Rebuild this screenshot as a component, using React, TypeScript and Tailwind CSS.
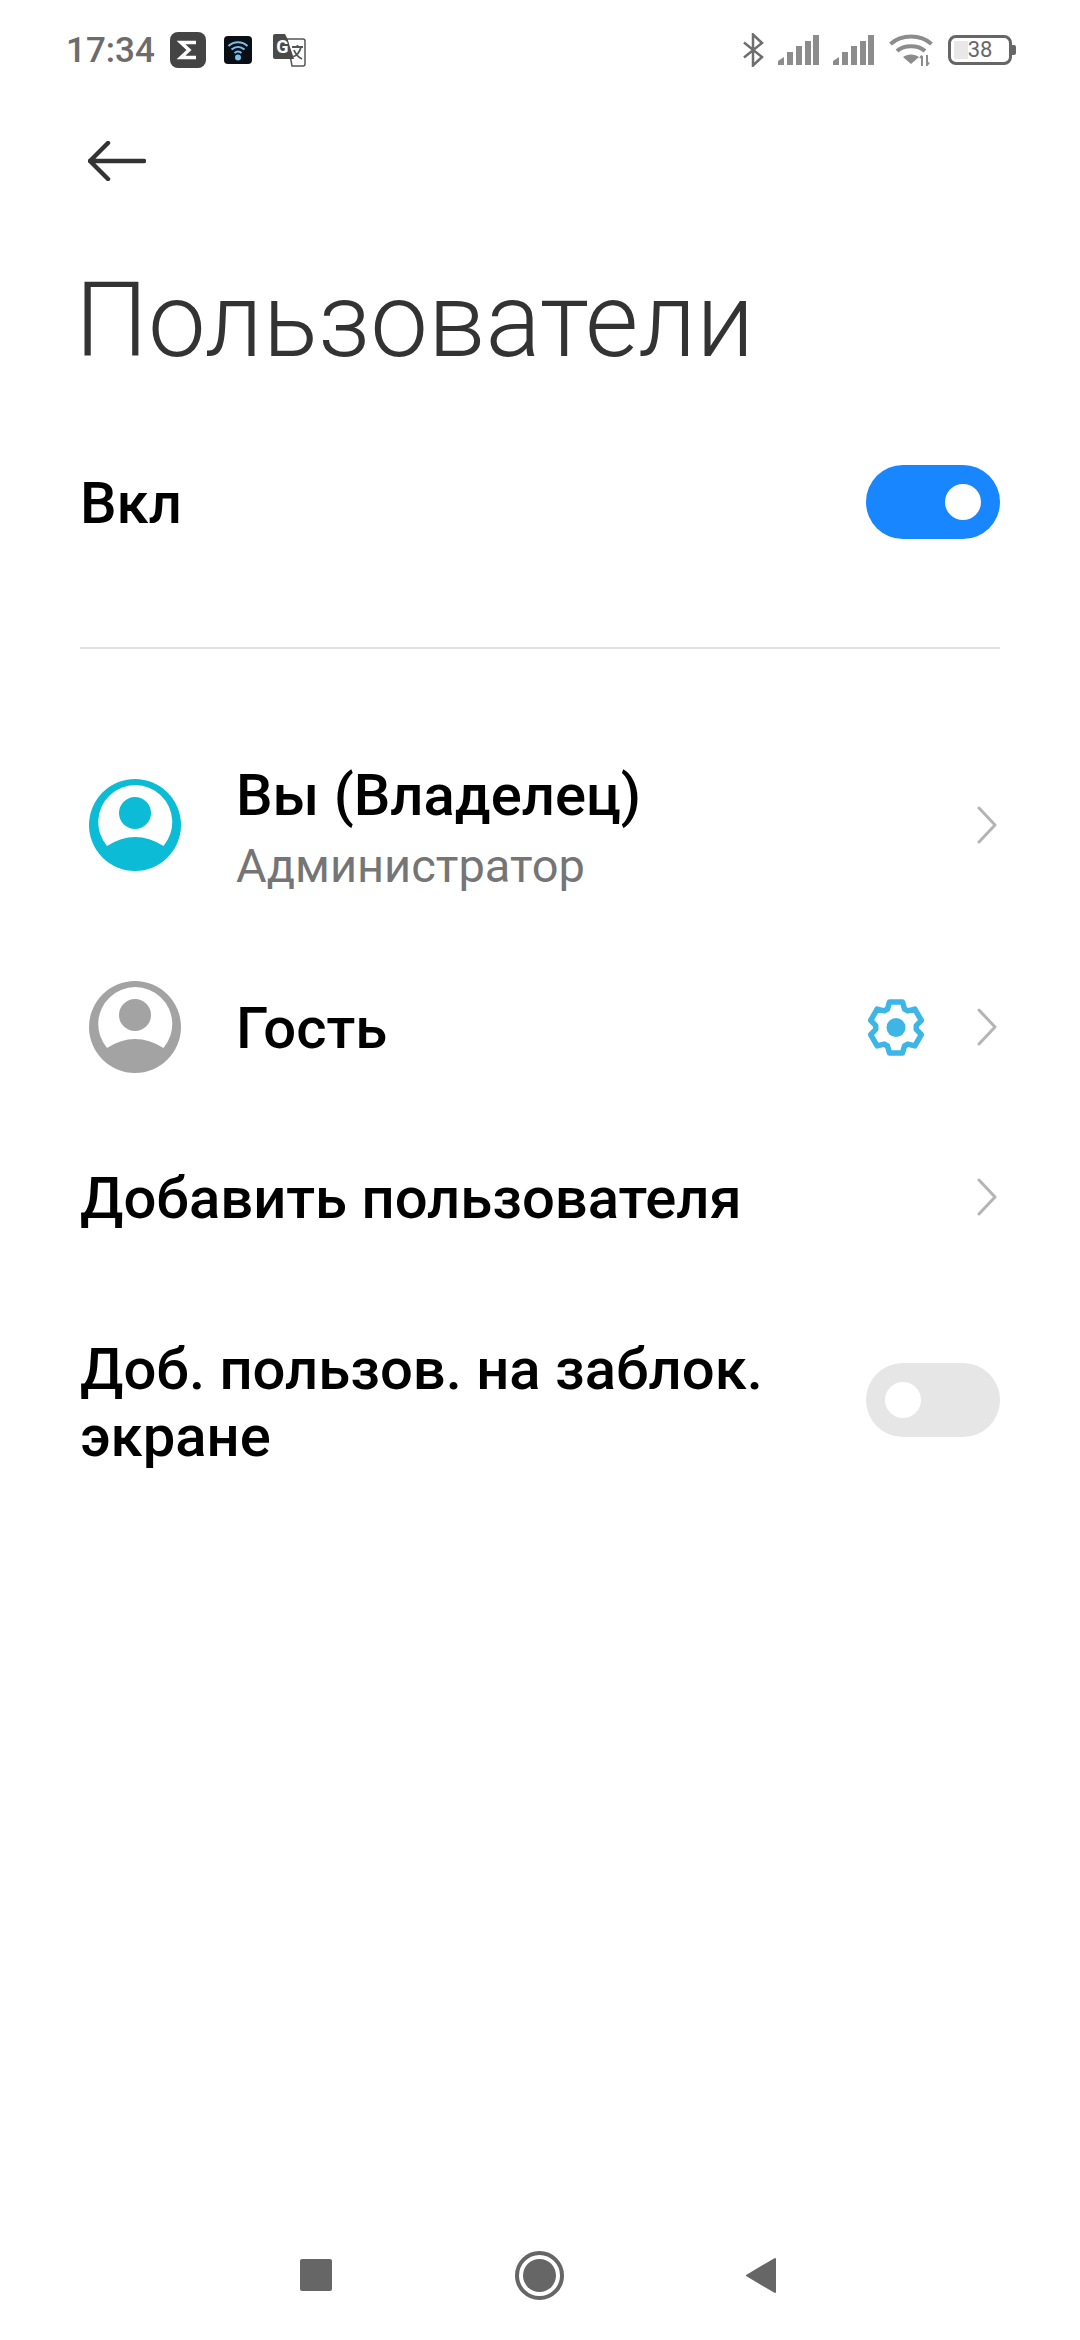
const font = "font-['Roboto','Noto_Sans',sans-serif]";

function gearPath() {
  // six flat teeth, starting from the top one
  const pts: string[] = [];
  for (let k = 0; k < 6; k++) {
    const a = (k * Math.PI) / 3 - Math.PI / 2;
    const ca = Math.cos(a);
    const sa = Math.sin(a);
    const pt = (r: number, w: number) => `${(28 + r * ca - w * sa).toFixed(2)} ${(28.5 + r * sa + w * ca).toFixed(2)}`;
    pts.push(pt(18.5, -8.5), pt(25.5, -6.5), pt(25.5, 6.5), pt(18.5, 8.5));
  }
  return "M" + pts.join("L") + "Z";
}

function Avatar({ color }: { color: string }) {
  return (
    <svg width="92" height="92" viewBox="0 0 92 92" className="shrink-0">
      <circle cx="46" cy="46" r="46" fill={color} />
      <path d="M18 67A37 37 0 1 1 74.500 67Q46 49 18 67Z" fill="#fff" />
      <circle cx="46" cy="34" r="16" fill={color} />
    </svg>
  );
}

function Chevron() {
  return (
    <svg width="20" height="38" viewBox="0 0 20 38" className="shrink-0">
      <path d="M2 2L18 19L2 36" fill="none" stroke="#b4b4b4" strokeWidth="3" strokeLinecap="round" strokeLinejoin="round" />
    </svg>
  );
}

function Toggle({ on }: { on: boolean }) {
  return (
    <div
      className={`w-[134px] h-[74px] rounded-full flex items-center shrink-0 ${
        on ? "bg-[#1786ff] justify-end pr-[19px]" : "bg-[#e6e6e6] justify-start pl-[19px]"
      }`}
    >
      <div className="w-[36px] h-[36px] rounded-full bg-white" />
    </div>
  );
}

function Signal() {
  return (
    <svg width="41" height="30" viewBox="0 0 41 30">
      <path d="M0 30V26L6 22V30Z" fill="#8c8c8c" />
      <rect x="9" y="17" width="6" height="13" fill="#8c8c8c" />
      <rect x="18" y="11" width="6" height="19" fill="#8c8c8c" />
      <rect x="27" y="6" width="6" height="24" fill="#8c8c8c" />
      <rect x="35" y="0" width="6" height="30" fill="#8c8c8c" />
    </svg>
  );
}

function StatusBar() {
  return (
    <div className="h-[100px] pl-[66px] pr-[64px] flex items-center justify-between shrink-0">
      <div className="flex items-center">
        <span className="text-[35px] leading-none font-medium text-[#6c6c6c] w-[104px]">17:34</span>
        <div className="w-[36px] h-[36px] rounded-[8px] bg-[#444444] flex items-center justify-center">
          <svg width="24" height="24" viewBox="0 0 24 24">
            <path d="M20 4.500H5L13 12L5 19.500H20" fill="none" stroke="#fff" strokeWidth="3.500" />
          </svg>
        </div>
        <div className="ml-[18px] w-[28px] h-[28px] rounded-[4px] bg-[#0a0f16] flex items-center justify-center">
          <svg width="24" height="24" viewBox="0 0 24 24" fill="none" stroke="#76c0ee" strokeWidth="2">
            <path d="M2.500 8C8 3 16 3 21.500 8" />
            <path d="M5.500 11.500C9.500 8 14.500 8 18.500 11.500" />
            <path d="M8.500 15C10.500 13.300 13.500 13.300 15.500 15" />
            <circle cx="12" cy="19.500" r="3" fill="#76c0ee" stroke="none" />
          </svg>
        </div>
        <svg width="34" height="34" viewBox="0 0 34 34" className="ml-[20px]">
          <path d="M15 6H31A2 2 0 0 1 33 8V31A2 2 0 0 1 31 33H20Z" fill="#fff" stroke="#555" strokeWidth="1.500" />
          <path d="M3 1H13L15 5L22 26H3A2 2 0 0 1 1 24V3A2 2 0 0 1 3 1Z" fill="#4a4a4a" />
          <text x="10.500" y="20" fontSize="18" fontWeight="700" fill="#fff" textAnchor="middle" fontFamily="Roboto">G</text>
          <path d="M20 14H31M25.500 12V14M29 14C27.500 20 24 23 20.500 24M22 17C23.500 21 26 24 30 26" fill="none" stroke="#555" strokeWidth="1.800" />
        </svg>
      </div>
      <div className="flex items-center">
        <svg width="21" height="34" viewBox="0 0 21 34" fill="none" stroke="#6e6e6e" strokeWidth="2.500">
          <path d="M1 9.500L19 24L10 32.500V1.500L19 10L1 24.500" />
        </svg>
        <div className="ml-[14px] flex gap-[14px]">
          <Signal />
          <Signal />
        </div>
        <svg width="44" height="32" viewBox="0 0 44 32" className="ml-[15px]">
          <g fill="none" stroke="#8c8c8c" strokeWidth="4">
            <path d="M1.500 10C12.500 0 31.500 0 42.500 10" />
            <path d="M8 17C15 10.500 29 10.500 36 17" />
          </g>
          <path d="M14 23C18 19.500 26 19.500 30 23L22 30Z" fill="#8c8c8c" />
          <path d="M33 22V32M31 24L33 21.500M38 21V31L40 28.500" fill="none" stroke="#8c8c8c" strokeWidth="2" />
        </svg>
        <div className="ml-[15px] flex items-center">
          <div className="relative w-[64px] h-[30px] rounded-[8px] border-[3.500px] border-[#666666] flex items-center justify-center">
            <div className="absolute left-[3px] top-[3px] bottom-[3px] w-[14px] bg-[#e8e8e8]" />
            <span className="relative text-[22px] leading-none text-[#666666]">38</span>
          </div>
          <div className="w-[4px] h-[10px] rounded-r-[2px] bg-[#666666]" />
        </div>
      </div>
    </div>
  );
}

export default function App() {
  return (
    <div className={`w-[1080px] h-[2340px] bg-white flex flex-col text-black ${font}`}>
      <StatusBar />

      <div className="pl-[88px] pt-[41px] h-[79px]">
        <svg width="58" height="40" viewBox="0 0 58 40" fill="none" stroke="#333" strokeWidth="4.500" strokeLinecap="round" strokeLinejoin="round">
          <path d="M56 20H2M20 2L2 20L20 38" />
        </svg>
      </div>

      <h1 className="pl-[75px] mt-[80px] text-[103px] leading-[124px] font-light text-[#333333]">Пользователи</h1>

      <div className="mt-[82px] pl-[80px] pr-[80px] h-[74px] flex items-center justify-between">
        <span className="text-[58px] font-medium pt-[3px]">Вкл</span>
        <Toggle on />
      </div>

      <div className="mx-[80px] mt-[108px] h-[2px] bg-[#e2e2e2]" />

      <div className="mt-[130px] pl-[89px] pr-[83px] h-[92px] flex items-center">
        <Avatar color="#0cbcd6" />
        <div className="ml-[55px] flex-1 flex flex-col pt-[10px]">
          <span className="text-[58px] leading-[62px] font-medium">Вы (Владелец)</span>
          <span className="text-[47px] leading-[60px] text-[#757575] mt-[10px]">Администратор</span>
        </div>
        <Chevron />
      </div>

      <div className="mt-[110px] pl-[89px] pr-[83px] h-[92px] flex items-center">
        <Avatar color="#a3a3a3" />
        <span className="ml-[55px] flex-1 text-[58px] font-medium pt-[3px]">Гость</span>
        <svg width="56" height="57" viewBox="0 0 56 57" className="mr-[53px]">
          <path d={gearPath()} fill="none" stroke="#3db5e6" strokeWidth="5.500" strokeLinejoin="round" />
          <circle cx="28" cy="28.500" r="9.500" fill="#3db5e6" />
        </svg>
        <Chevron />
      </div>

      <div className="mt-[89px] pl-[80px] pr-[83px] h-[70px] flex items-center justify-between">
        <span className="text-[58px] font-medium pt-[2px]">Добавить пользователя</span>
        <Chevron />
      </div>

      <div className="mt-[98px] pl-[80px] pr-[80px] flex items-center justify-between">
        <span className="text-[58px] leading-[67px] font-medium w-[720px] pt-[6px]">Доб. пользов. на заблок. экране</span>
        <Toggle on={false} />
      </div>

      <div className="mt-auto h-[90px] mb-[20px] flex items-center pl-[300px]">
        <div className="w-[32px] h-[32px] rounded-[2px] bg-[#666666]" />
        <div className="ml-[183px] w-[49px] h-[49px] rounded-full border-[4px] border-[#666666] flex items-center justify-center">
          <div className="w-[33px] h-[33px] rounded-full bg-[#666666]" />
        </div>
        <svg width="32" height="37" viewBox="0 0 32 37" className="ml-[181px]">
          <path d="M30 2V35L2 18.500Z" fill="#666666" stroke="#666666" strokeWidth="2" strokeLinejoin="round" />
        </svg>
      </div>
    </div>
  );
}
